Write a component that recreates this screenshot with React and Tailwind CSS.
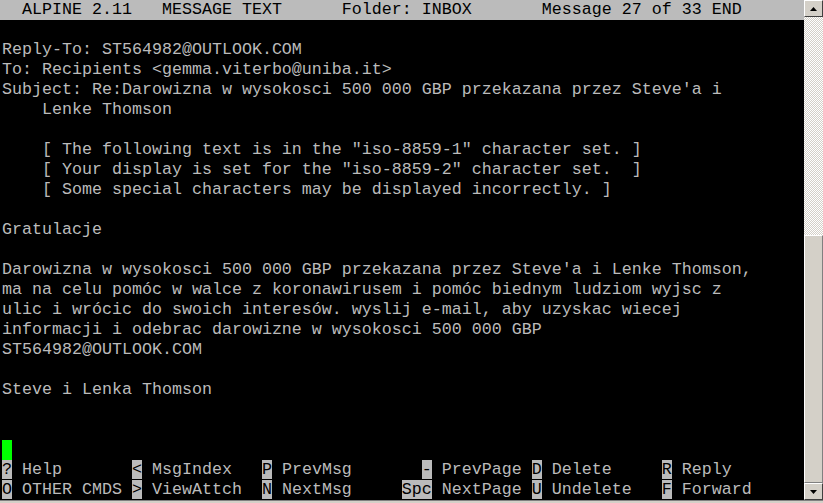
import React from "react";

const rows = [
  "",
  "Reply-To: ST564982@OUTLOOK.COM",
  "To: Recipients <gemma.viterbo@uniba.it>",
  "Subject: Re:Darowizna w wysokosci 500 000 GBP przekazana przez Steve'a i",
  "    Lenke Thomson",
  "",
  '    [ The following text is in the "iso-8859-1" character set. ]',
  '    [ Your display is set for the "iso-8859-2" character set.  ]',
  "    [ Some special characters may be displayed incorrectly. ]",
  "",
  "Gratulacje",
  "",
  "Darowizna w wysokosci 500 000 GBP przekazana przez Steve'a i Lenke Thomson,",
  "ma na celu pomóc w walce z koronawirusem i pomóc biednym ludziom wyjsc z",
  "ulic i wrócic do swoich interesów. wyslij e-mail, aby uzyskac wiecej",
  "informacji i odebrac darowizne w wysokosci 500 000 GBP",
  "ST564982@OUTLOOK.COM",
  "",
  "Steve i Lenka Thomson",
  "",
  "",
];

const menu1 = [
  ["?", " Help       "],
  ["<", " MsgIndex   "],
  ["P", " PrevMsg       "],
  ["-", " PrevPage "],
  ["D", " Delete     "],
  ["R", " Reply"],
];
const menu2 = [
  ["O", " OTHER CMDS "],
  [">", " ViewAttch  "],
  ["N", " NextMsg     "],
  ["Spc", " NextPage "],
  ["U", " Undelete   "],
  ["F", " Forward"],
];

function Row({ children, className = "" }) {
  return <div className={"h-[20px] whitespace-pre " + className}>{children}</div>;
}

function MenuRow({ items }) {
  return (
    <Row>
      {items.map(([k, l], i) => (
        <React.Fragment key={i}>
          <span className="bg-[#bbbbbb] text-black">{k}</span>
          <span>{l}</span>
        </React.Fragment>
      ))}
    </Row>
  );
}

function Arrow({ up }) {
  return (
    <svg width="7" height="4" viewBox="0 0 7 4">
      {up ? <polygon points="3.5,0 7,4 0,4" fill="#000" /> : <polygon points="0,0 7,0 3.5,4" fill="#000" />}
    </svg>
  );
}

function Btn({ up }) {
  return (
    <div className="h-[17px] w-full bg-[#d4d0c8] border-t border-l border-t-white border-l-white border-r border-b border-r-[#404040] border-b-[#404040] flex items-center justify-center">
      <Arrow up={up} />
    </div>
  );
}

export default function App() {
  return (
    <div className="w-[823px] h-[503px] flex flex-col bg-[#d4d0c8] overflow-hidden">
      <div className="flex h-[500px]">
        <div
          className="w-[804px] h-[500px] bg-black text-[#bbbbbb] text-[16.667px] leading-[20px]"
          style={{ fontFamily: '"Liberation Mono", "Courier New", monospace' }}
        >
          <Row className="bg-[#bbbbbb] text-black pl-[2px]">
            {"  ALPINE 2.11   MESSAGE TEXT      Folder: INBOX       Message 27 of 33 END"}
          </Row>
          <div className="pl-[2px]">
            {rows.map((r, i) => (
              <Row key={i}>{r}</Row>
            ))}
            <Row>
              <span className="inline-block w-[10px] h-[20px] bg-[#00ff00] align-top" />
            </Row>
            <MenuRow items={menu1} />
            <MenuRow items={menu2} />
          </div>
        </div>
        <div className="w-[19px] h-[500px] flex flex-col">
          <Btn up />
          <div className="h-[218px] bg-[repeating-conic-gradient(#ffffff_0_25%,#d4d0c8_0_50%)] bg-[length:2px_2px]" />
          <div className="flex-1 bg-[#d4d0c8] border-t border-l border-t-white border-l-white border-r border-b border-r-[#808080] border-b-[#808080]" />
          <Btn />
        </div>
      </div>
      <div className="h-[3px] bg-[#d4d0c8] border-t border-t-[#808080]" />
    </div>
  );
}
